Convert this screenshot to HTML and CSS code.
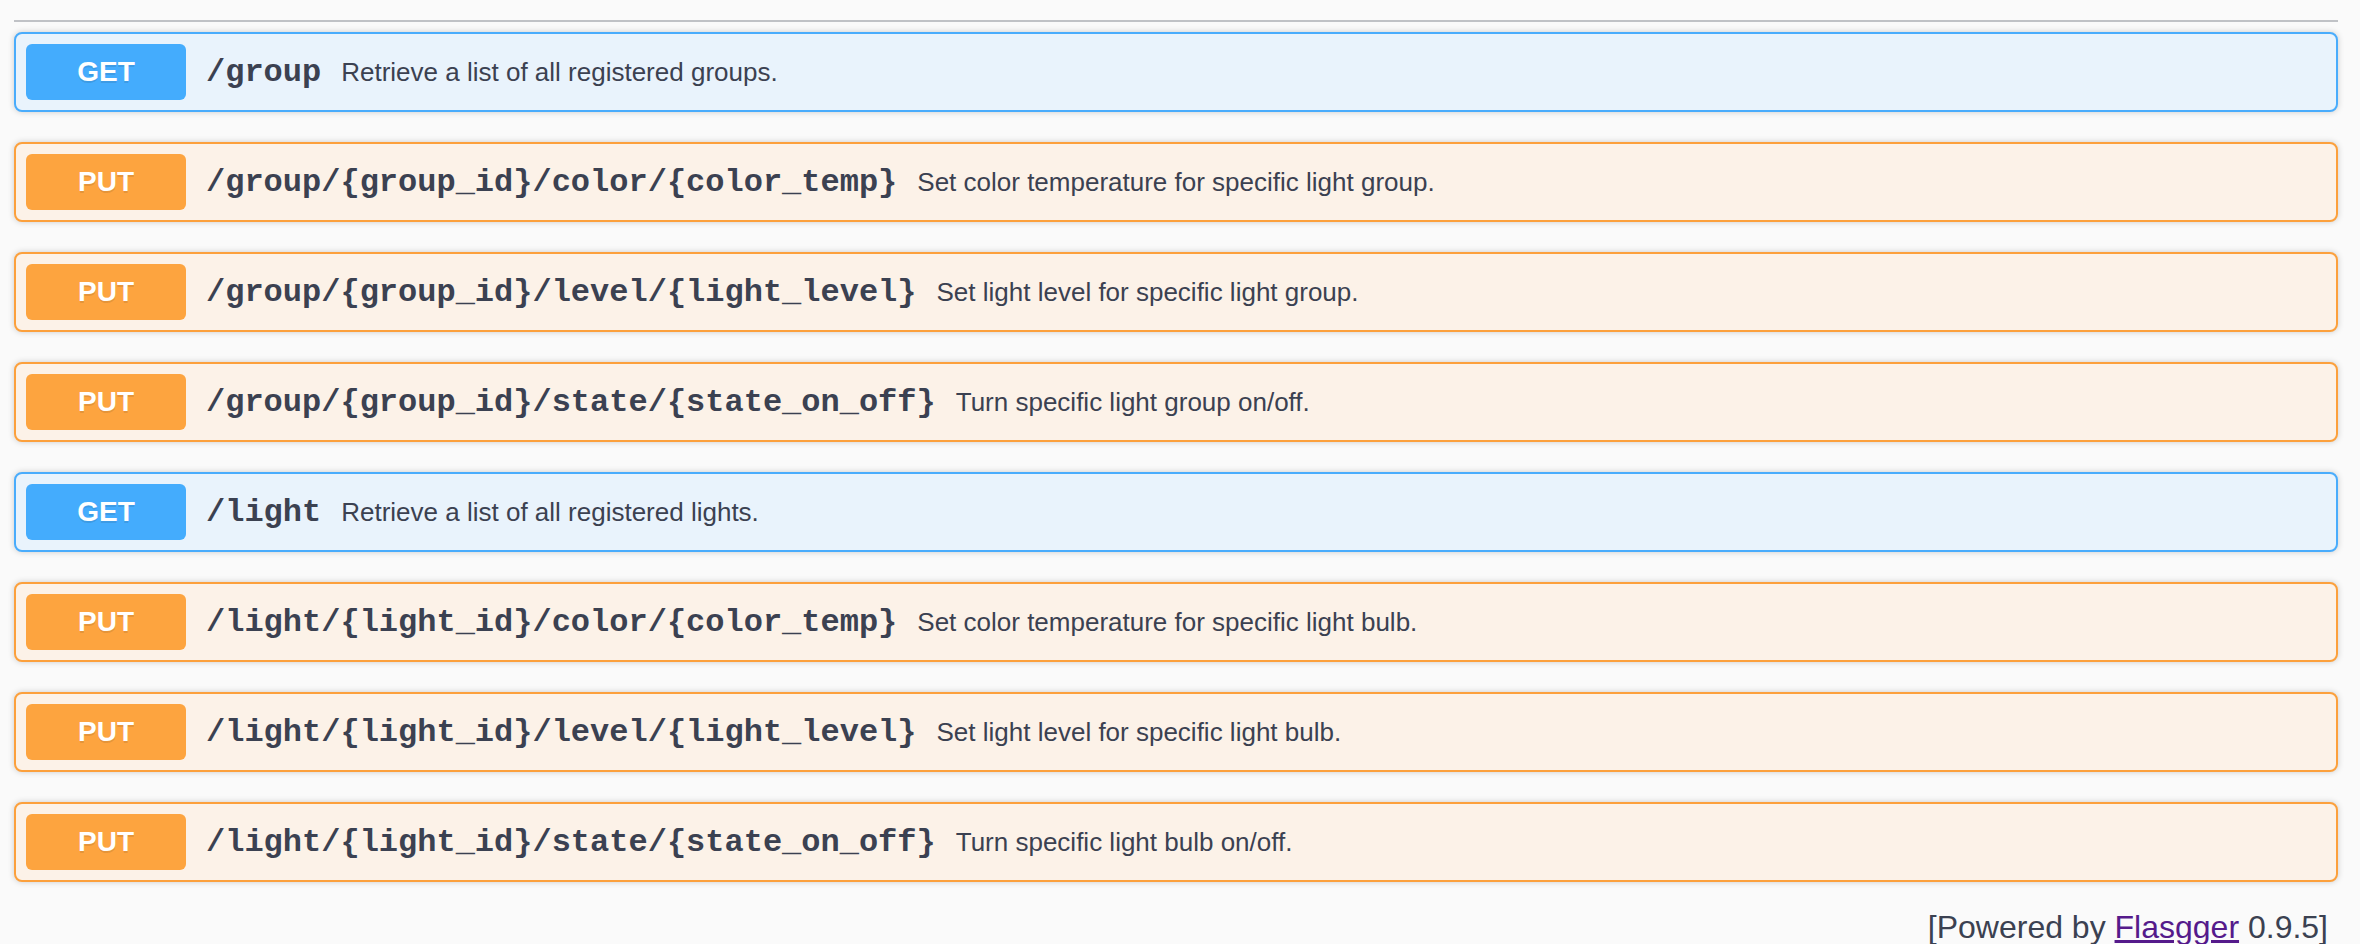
FILE: index.html
```html
<!DOCTYPE html>
<html>
<head>
<meta charset="utf-8">
<title>Flasgger</title>
<link rel="stylesheet" href="styles.css">
</head>
<body>
<div class="page">
  <div class="tag-line"></div>
  <div class="ops">
    <div class="opblock get">
      <div class="summary"><span class="method">GET</span><span class="path">/group</span><span class="desc">Retrieve a list of all registered groups.</span></div>
    </div>
    <div class="opblock put">
      <div class="summary"><span class="method">PUT</span><span class="path">/group/{group_id}/color/{color_temp}</span><span class="desc">Set color temperature for specific light group.</span></div>
    </div>
    <div class="opblock put">
      <div class="summary"><span class="method">PUT</span><span class="path">/group/{group_id}/level/{light_level}</span><span class="desc">Set light level for specific light group.</span></div>
    </div>
    <div class="opblock put">
      <div class="summary"><span class="method">PUT</span><span class="path">/group/{group_id}/state/{state_on_off}</span><span class="desc">Turn specific light group on/off.</span></div>
    </div>
    <div class="opblock get">
      <div class="summary"><span class="method">GET</span><span class="path">/light</span><span class="desc">Retrieve a list of all registered lights.</span></div>
    </div>
    <div class="opblock put">
      <div class="summary"><span class="method">PUT</span><span class="path">/light/{light_id}/color/{color_temp}</span><span class="desc">Set color temperature for specific light bulb.</span></div>
    </div>
    <div class="opblock put">
      <div class="summary"><span class="method">PUT</span><span class="path">/light/{light_id}/level/{light_level}</span><span class="desc">Set light level for specific light bulb.</span></div>
    </div>
    <div class="opblock put">
      <div class="summary"><span class="method">PUT</span><span class="path">/light/{light_id}/state/{state_on_off}</span><span class="desc">Turn specific light bulb on/off.</span></div>
    </div>
  </div>
  <div class="footer">[Powered by <a class="flink" href="#">Flasgger</a> 0.9.5]</div>
</div>
</body>
</html>
```

FILE: styles.css
```css
html, body {
  margin: 0;
  padding: 0;
  background: #fafafa;
}
body {
  font-family: "Liberation Sans", Arial, sans-serif;
  color: #3b4151;
  overflow: hidden;
}
.page {
  padding: 20px 22px 0 14px;
}
.tag-line {
  height: 0;
  border-bottom: 2px solid rgba(59, 65, 81, 0.3);
}
.ops {
  display: flex;
  flex-direction: column;
  gap: 30px;
  margin-top: 10px;
}
.opblock {
  border: 2px solid;
  border-radius: 8px;
  box-shadow: 0 0 6px rgba(0, 0, 0, 0.19);
}
.opblock.get {
  border-color: #49acfc;
  background: #e9f3fc;
}
.opblock.put {
  border-color: #fca03c;
  background: #fcf2e8;
}
.summary {
  display: flex;
  align-items: center;
  padding: 10px;
}
.method {
  min-width: 160px;
  box-sizing: border-box;
  padding: 12px 30px;
  line-height: 32px;
  font-size: 28px;
  font-weight: 700;
  text-align: center;
  color: #fff;
  border-radius: 6px;
  text-shadow: 0 2px 0 rgba(0, 0, 0, 0.1);
}
.get .method { background: #44acfd; }
.put .method { background: #fda43f; }
.path {
  font-family: "Liberation Mono", "Courier New", monospace;
  font-weight: 700;
  font-size: 32px;
  padding: 0 20px;
  color: #3b4151;
}
.desc {
  font-size: 26px;
  color: #3b4151;
}
.footer {
  margin-top: 27px;
  text-align: right;
  font-size: 32px;
  padding-right: 10px;
  color: #3b4151;
}
.flink {
  color: #551a8b;
  text-decoration: underline;
}
```
